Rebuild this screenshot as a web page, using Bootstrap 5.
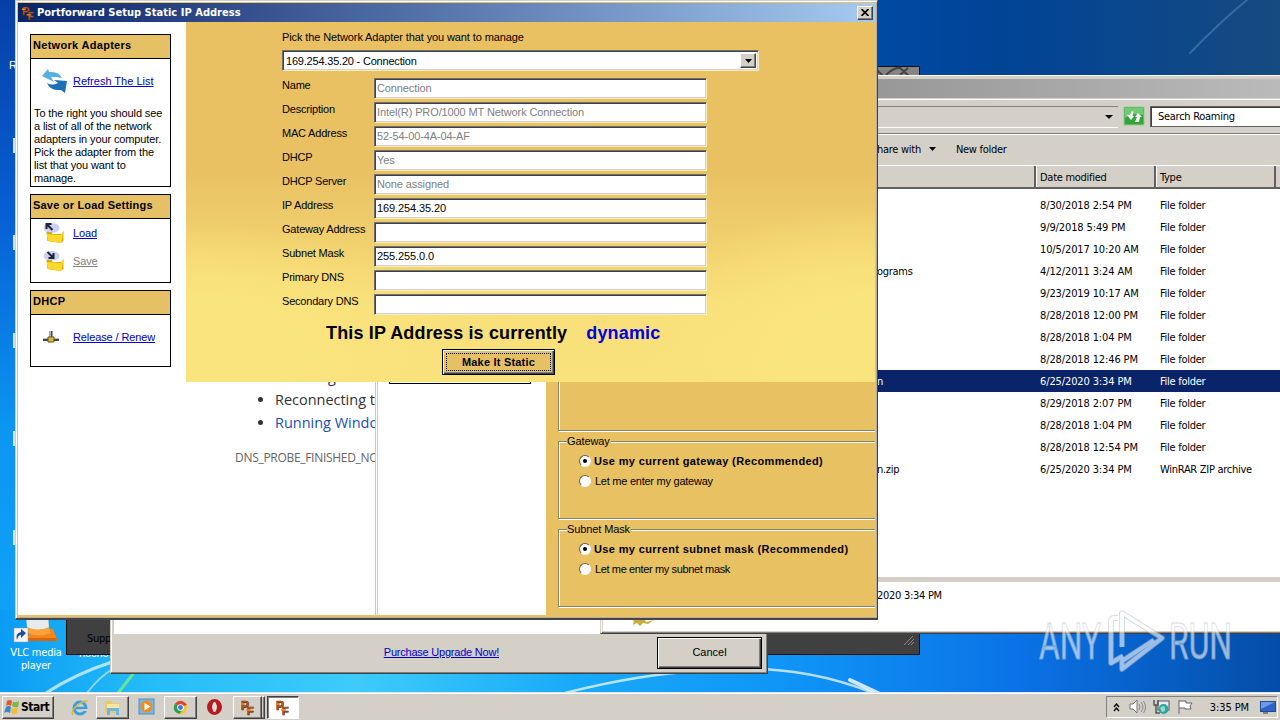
<!DOCTYPE html>
<html lang="en">
<head>
    <meta charset="UTF-8">
    <meta name="viewport" content="width=device-width, initial-scale=1.0">
    <title>Portforward Setup Static IP Address</title>
    <link href="https://cdn.jsdelivr.net/npm/bootstrap@5.3.3/dist/css/bootstrap.min.css" rel="stylesheet">
    <style>
        body {
            width: 1280px;
            height: 720px;
            overflow: hidden;
            font: 11px/13px "Liberation Sans", sans-serif;
            letter-spacing: -.11px;
            color: #000;
            background: #0a6ce0;
        }
        .tahoma { font-family: "DejaVu Sans Condensed", "DejaVu Sans", sans-serif; font-size: 11px; letter-spacing: -.28px; }
        .desktop, .win, .desk-item { position: absolute; }
        .desktop { inset: 0; overflow: hidden; white-space: nowrap; }
        .wallpaper { position: absolute; inset: 0; }
        .desk-item { color: #fff; text-align: center; }
        .sliver { left: 13px; width: 4px; height: 15px; background: #d5e4f2; }
        a { color: #0000c8; }
        svg { flex: none; display: block; }

        /* dark window and installer behind */
        .dark-win { left: 66px; top: 66px; width: 854px; height: 589px; background: #404040; border: 1px solid #111; }
        .setup-win { left: 110px; top: 400px; width: 658px; height: 274px; background: #d4d0c8; border: 1px solid #404040; border-left-color: #d4d0c8; box-shadow: inset -1px -1px #808080, inset 1px 0 #fff; padding: 0 4px 2px 3px; }
        .setup-body { background: #fff; height: 233px; }
        .cancel-btn { width: 105px; height: 32px; border: 1px solid #000; border-radius: 0; background: #d4d0c8; box-shadow: inset 1px 1px #fff, inset -1px -1px #404040, inset -2px -2px #808080; font: inherit; color: #000; padding: 0; }

        /* explorer */
        .explorer { left: 600px; top: 75px; width: 700px; height: 559px; background: #d4d0c8; border-left: 1px solid #d4d0c8; border-bottom: 1px solid #404040; box-shadow: inset 1px 1px #fff, inset 0 -1px #808080; padding: 4px 0 3px 2px; }
        .ex-title { height: 19px; background: linear-gradient(90deg, #808080, #bcbcbc); }
        .ex-address { height: 35px; border-top: 1px solid #fff; border-bottom: 1px solid #808080; padding: 6px 0 0 0; margin-top: 1px; }
        .ex-path { width: 515px; height: 22px; border: 1px solid #808080; border-width: 1px 0 0; border-bottom: 1px solid #fff; padding-right: 5px; }
        .ex-search { width: 160px; height: 21px; margin-left: 5px; padding-left: 7px; background: #fff; border: 1px solid #606060; box-shadow: inset 1px 1px #404040; }
        .ex-tools { height: 31px; border-top: 1px solid #fff; padding: 0 0 2px 274px; }
        .ex-head { height: 24px; border-top: 1px solid #fff; border-bottom: 2px solid #606060; }
        .ex-head > div { padding: 1px 0 0 4px; border-right: 2px solid #606060; box-shadow: inset 1px 0 #fff; }
        .col-name { width: 433px; }
        .col-date { width: 120px; }
        .col-kind { width: 120px; }
        .ex-list { height: 388px; padding-top: 5px; background: #fff; }
        .ex-row { height: 22px; line-height: 24px; }
        .ex-row .col-name { padding-left: 274px; }
        .ex-row .col-date, .ex-row .col-kind { padding-left: 4px; }
        .ex-row .col-date { letter-spacing: -.12px; }
        .ex-row.picked { background: #0a246a; color: #fff; }
        .ex-details { height: 49px; margin-top: 5px; padding-left: 27px; background: #fff; }

        /* main window */
        .main-win { left: 15px; top: 0; width: 863px; height: 620px; background: #ebc263; border: 1px solid #d4d0c8; border-right-color: #404040; border-bottom: 2px solid #49434a; box-shadow: inset 1px 1px #fff, inset -1px -1px #b5ada0; padding: 2px; }
        .main-title { height: 19px; padding: 1px 2px 1px 3px; background: linear-gradient(90deg, #0a246a, #a6caf0); color: #fff; }
        .main-title b { letter-spacing: .03px; margin-left: 1px; }
        .close-btn { width: 16px; height: 14px; background: #d4d0c8; border: 1px solid; border-color: #fff #404040 #404040 #fff; box-shadow: inset -1px -1px #808080; }
        .setting-side { width: 168px; background: #fff; padding: 12px 15px 0 12px; }
        .side-box { border: 1px solid #000; margin-bottom: 7px; }
        .side-box h2 { font: bold 11px/20px "Liberation Sans", sans-serif; letter-spacing: .3px; height: 24px; margin: 0; padding-left: 2px; background: #e6c064; border-bottom: 1px solid #000; }
        .side-box p { margin: 0; padding: 0 3px; letter-spacing: -.12px; }
        .link-row { height: 28px; padding-left: 11px; }
        .link-row a { margin-left: 6px; }
        .form-pane { height: 360px; padding: 9px 0 0 96px; background:
            radial-gradient(ellipse 300px 130px at 0 330px, #fae47e 0, #fae47e 40%, rgba(250,228,126,0) 100%),
            radial-gradient(ellipse 240px 150px at 690px 330px, #fae47e 0, #fae47e 35%, rgba(250,228,126,0) 100%),
            linear-gradient(#e9c163 0, #e9c163 150px, #f8df79 290px, #f9e17c 360px); }
        .sunken { background: #fff; border: 1px solid; border-color: #707070 #f8efc0 #f8efc0 #707070; box-shadow: inset 1px 1px #404040, inset -1px -1px #d4d0c8; }
        .adapter-pick { width: 477px; height: 21px; margin: 6px 0 7px; padding: 2px 2px 2px 3px; letter-spacing: -.2px; }
        .pick-arrow { width: 16px; background: #d4d0c8; border: 1px solid; border-color: #fff #404040 #404040 #fff; box-shadow: inset -1px -1px #808080; }
        .field-row { height: 24px; }
        .field-row label { width: 92px; padding-top: 1px; letter-spacing: -.2px; }
        .field-row .sunken { width: 333px; height: 21px; padding: 3px 2px; }
        .off { color: #808080; }
        .state-line { font: bold 18px/24px "Liberation Sans", sans-serif; padding-left: 44px; margin-top: 3px; letter-spacing: .15px; }
        .state-line span { color: #0000e0; margin-left: 19px; }
        .static-btn { width: 113px; height: 26px; margin: 4px 0 0 160px; padding: 3px; background: #e6c064; border: 1px solid #000; border-radius: 0; box-shadow: inset 1px 1px #fff, inset -1px -1px #404040, inset -2px -2px #808080; }
        .static-btn b { border: 1px dotted #000; font-size: 11px; line-height: 16px; letter-spacing: .2px; color: #000; }
        .lower { height: 233px; }
        .probe-pane { width: 190px; overflow: hidden; border-right: 1px solid #c8c8c8; font: 14.5px/23px "Open Sans", sans-serif; color: #333; letter-spacing: -.02px; }
        .probe-pane ul { margin: -17px 0 0; padding-left: 89px; }
        .probe-pane code { display: block; margin: 13px 0 0 49px; font: 12px/22px "Open Sans", sans-serif; color: #646464; letter-spacing: -.3px; }
        .blank-pane { width: 170px; background: #fff; padding: 0 15px 0 13px; box-shadow: inset 1px 0 #fff, inset 2px 0 #c8c8c8; }
        .blank-pane div { border: 1px solid #000; border-top: 0; height: 2px; }
        .opt-pane { padding-left: 12px; background: #e8c163; overflow: hidden; }
        .opt-group { width: 330px; height: 78px; border: 1px solid #85816f; box-shadow: 1px 1px #fff, inset 1px 1px #fff; padding-left: 8px; margin-bottom: 10px; }
        .opt-group legend { float: none; width: auto; margin: -7px 0 0; padding: 0 1px 0 0; font-size: 11px; line-height: 13px; background: #e8c163; display: table; }
        .opt-line { height: 20px; padding-left: 12px; gap: 4px; letter-spacing: -.25px; }
        .opt-line b { letter-spacing: .37px; margin-left: -1px; }
        .radio-dot { width: 12px; height: 12px; border: 1px solid; border-color: #606060 #fff #fff #606060; border-radius: 50%; background: #fff; }
        .radio-dot.on::after { content: ""; display: block; width: 4px; height: 4px; margin: 3px; border-radius: 50%; background: #000; }

        /* taskbar */
        .taskbar { position: absolute; left: 0; right: 0; bottom: 0; height: 28px; padding: 3px 2px 1px; background: #d4d0c8; border-top: 1px solid #e8e5de; box-shadow: inset 0 1px #fff; }
        .task-btn { height: 23px; border: 1px solid; border-color: #fff #404040 #404040 #fff; box-shadow: inset -1px -1px #808080; }
        .task-btn.active { background: #fff; border-color: #404040 #fff #fff #404040; box-shadow: inset 1px 1px #808080; }
        .tray { width: 172px; height: 22px; border: 1px solid; border-color: #808080 #fff #fff #808080; }
        .watermark { position: absolute; left: 1030px; top: 600px; letter-spacing: 0; overflow: visible; }
    </style>
</head>
<body>
<svg width="0" height="0" style="position:absolute">
    <defs>
        <symbol id="pf" viewBox="0 0 16 16">
            <g font-family="Liberation Sans" font-weight="bold" fill="#d86a1c" stroke="#5a2a10" stroke-width=".7">
                <text x="1" y="10" font-size="12">P</text>
                <text x="7" y="15" font-size="11">F</text>
            </g>
            <path d="M1 4h4M6 10h5" stroke="#f08a2c" stroke-width="1.5"/>
        </symbol>
        <symbol id="folder" viewBox="0 0 22 22">
            <ellipse cx="9" cy="6" rx="8" ry="5" fill="#ccd1f2"/>
            <path d="M4 10h5l1 2h9l2-3v10l-3 2-13-2z" fill="#d9a900"/>
            <path d="M4 12l14 1 3-4-2 12-13-2z" fill="#fbd92b"/>
        </symbol>
        <linearGradient id="sky" x1="0" y1="0" x2="1" y2="0">
            <stop offset="0" stop-color="#0a52c4"/><stop offset=".6" stop-color="#0050b0"/><stop offset=".78" stop-color="#004496"/><stop offset="1" stop-color="#164a80"/>
        </linearGradient>
        <linearGradient id="left" x1="0" y1="0" x2="0" y2="1">
            <stop offset="0" stop-color="#083fa6"/><stop offset=".3" stop-color="#0660d4"/><stop offset=".6" stop-color="#0c96f2"/><stop offset="1" stop-color="#12a8f8"/>
        </linearGradient>
        <linearGradient id="low" x1="0" y1="0" x2="1" y2="0">
            <stop offset="0" stop-color="#0b9cf4"/><stop offset=".12" stop-color="#25bdf8"/><stop offset=".28" stop-color="#3ecbfa"/><stop offset=".45" stop-color="#18aaf8"/><stop offset=".62" stop-color="#0f94f6"/><stop offset=".8" stop-color="#0a72e6"/><stop offset="1" stop-color="#044da6"/>
        </linearGradient>
    </defs>
</svg>

<div class="desktop">
    <svg class="wallpaper" width="1280" height="720">
        <rect width="1280" height="720" fill="url(#sky)"/>
        <rect width="110" height="720" fill="url(#left)"/>
        <rect y="610" width="1280" height="110" fill="url(#low)"/>
        <g fill="none" stroke="#fff" stroke-linecap="round">
            <path d="M46 693Q75 674 112 662" stroke-width="3" opacity=".65"/>
            <path d="M87 693Q98 678 114 668" stroke-width="2" opacity=".5"/>
            <path d="M118 693l15-19" stroke="#7dee7a" stroke-width="3" opacity=".8"/>
            <path d="M565 693Q640 674 700 671Q800 660 885 698" stroke-width="2.5" opacity=".7"/>
            <path d="M850 680l30 14" stroke-width="4" opacity=".8"/>
            <path d="M1190 53Q1220 22 1247 0" stroke="#7aa8da" stroke-width="2" opacity=".35"/>
        </g>
    </svg>

    <div class="desk-item" style="left:9px;top:59px">R</div>
    <div class="desk-item sliver" style="top:138px"></div>
    <div class="desk-item sliver" style="top:235px"></div>
    <div class="desk-item sliver" style="top:333px"></div>
    <div class="desk-item sliver" style="top:431px"></div>
    <div class="desk-item sliver" style="top:530px"></div>
    <div class="desk-item" style="left:79px;top:647px">nocho</div>
    <div class="desk-item tahoma" style="left:6px;top:614px;width:60px;letter-spacing:-.2px">
        <svg width="60" height="32" viewBox="0 0 60 32">
            <path d="M25 15l22 0 5 12H20z" fill="#f7841a"/>
            <path d="M21 24h30v3H21z" fill="#d9660a"/>
            <path d="M20 0h22l1 14q-11 5-22 0z" fill="#e8ebec"/>
            <path d="M21 13q11 5 22 0l2 6q-12 5-23 0z" fill="#f9a23a"/>
            <path d="M8 14h14v14H8z" fill="#f4f4f4" stroke="#999" stroke-width=".5"/>
            <path d="M11 26q-2-7 4-8v-3l5 4-5 5v-3q-3 0-4 5z" fill="#1d4fa0"/>
        </svg>
        <div class="mt-0">VLC media<br>player</div>
    </div>

    <div class="win dark-win d-flex flex-column justify-content-between">
        <svg width="852" height="9"><rect x="780" width="72" height="9" fill="#858585"/><path d="M808 1l8 8M819 8q8-8 14-7l9 8M833 8l8-7" stroke="#444" stroke-width="2" fill="none"/></svg>
        <div class="d-flex justify-content-between align-items-end" style="padding:0 4px 9px 20px">
            <span class="tahoma">Supp</span>
            <svg width="12" height="10"><path d="M1 10L10 1M5 10l6-6M8 10l3-3" stroke="#888"/></svg>
        </div>
    </div>

    <div class="win setup-win d-flex flex-column">
        <div class="setup-body"></div>
        <div class="flex-fill d-flex justify-content-end align-items-center">
            <a href="#" style="letter-spacing:-.22px;margin-right:158px">Purchase Upgrade Now!</a>
            <button class="btn cancel-btn" style="margin-right:1px">Cancel</button>
        </div>
    </div>

    <div class="win explorer tahoma">
        <div class="ex-title"></div>
        <div class="ex-address d-flex align-items-start">
            <div class="ex-path d-flex justify-content-end align-items-center flex-shrink-0"><svg width="8" height="4" viewBox="0 0 8 4"><path d="M0 0h8L4 4z"/></svg></div>
            <svg width="22" height="21" viewBox="0 0 22 21" style="margin-left:5px">
                <rect x="1" y="1" width="20" height="18" fill="#35a33c" stroke="#8fcf8f"/>
                <path d="M2 2h18v7q-9-3-18 3z" fill="#72ca72"/>
                <path d="M9 5L7 9H4l4 5 3-4H9.500l1-4zM12 16l2-5h-2l3-4 4 4h-2l-1 5z" fill="#fff"/>
            </svg>
            <div class="ex-search d-flex align-items-center">Search Roaming</div>
        </div>
        <div class="ex-tools d-flex align-items-center">
            <span>hare with</span>
            <svg width="7" height="4" style="margin-left:8px"><path d="M0 0h7L3.500 4z"/></svg>
            <span style="margin-left:20px">New folder</span>
        </div>
        <div class="ex-head d-flex align-items-stretch">
            <div class="col-name"></div>
            <div class="col-date d-flex align-items-center">Date modified</div>
            <div class="col-kind d-flex align-items-center">Type</div>
        </div>
        <div class="ex-list" id="fileList"></div>
        <div class="ex-details d-flex align-items-start">
            <svg width="24" height="44" viewBox="0 0 24 44"><path d="M0 36h14l2 4 8-2-6 4-5-1-3 3-3-3-4 2 1-4z" fill="#c9ad3e"/></svg>
            <span style="margin:7px 0 0 223px">2020 3:34 PM</span>
        </div>
    </div>

    <div class="win main-win">
        <div class="main-title d-flex align-items-center tahoma">
            <svg width="15" height="16"><use href="#pf"/></svg>
            <b>Portforward Setup Static IP Address</b>
            <div class="close-btn ms-auto d-flex justify-content-center align-items-center"><svg width="8" height="7"><path d="M.5 0l7 7M7.500 0l-7 7" stroke="#000" stroke-width="1.600"/></svg></div>
        </div>
        <div class="d-flex">
            <div class="setting-side">
                <div class="side-box" style="height:153px">
                    <h2>Network Adapters</h2>
                    <div class="link-row d-flex align-items-center" style="height:44px">
                        <svg width="25" height="24" viewBox="0 0 25 24">
                            <path d="M0 7L6 0l1 3q10-1 13 6l-6-1-5 0 3 5z" fill="#55b0de"/>
                            <path d="M25 12l-2 12-4-3Q8 22 5 14q5 3 11 0l-4-3z" fill="#1d70b2"/>
                        </svg>
                        <a href="#" style="letter-spacing:0">Refresh The List</a>
                    </div>
                    <p style="padding-top:4px">To the right you should see<br>a list of all of the network<br>adapters in your computer.<br>Pick the adapter from the<br>list that you want to<br>manage.</p>
                </div>
                <div class="side-box" style="height:89px">
                    <h2 style="letter-spacing:.2px">Save or Load Settings</h2>
                    <div class="link-row d-flex align-items-center">
                        <svg width="23" height="22" viewBox="0 0 22 22"><use href="#folder"/><path d="M10 8L5 3M4 7V2h5" stroke="#223" stroke-width="2" fill="none"/></svg>
                        <a href="#" style="margin-left:8px">Load</a>
                    </div>
                    <div class="link-row d-flex align-items-center">
                        <svg width="23" height="22" viewBox="0 0 22 22"><use href="#folder"/><path d="M5 2l5 5M11 3v5H6" stroke="#223" stroke-width="2" fill="none"/></svg>
                        <a href="#" class="off" style="margin-left:8px">Save</a>
                    </div>
                </div>
                <div class="side-box" style="height:77px">
                    <h2>DHCP</h2>
                    <div class="link-row d-flex align-items-center" style="height:44px">
                        <svg width="19" height="14" viewBox="0 0 19 14"><path d="M1 9.500h16M9 1v7" stroke="#444" stroke-width="3"/><path d="M1 8.500h16M8.500 1v6" stroke="#bdbdbd"/><path d="M6 7h6v5H6z" fill="#d8b838" stroke="#66551a"/></svg>
                        <a href="#" style="margin-left:12px">Release / Renew</a>
                    </div>
                </div>
            </div>
            <div class="form-pane flex-fill">
                <div>Pick the Network Adapter that you want to manage</div>
                <div class="adapter-pick sunken d-flex justify-content-between">
                    <span style="line-height:16px">169.254.35.20 - Connection</span>
                    <span class="pick-arrow d-flex justify-content-center align-items-center"><svg width="7" height="4"><path d="M0 0h7L3.500 4z"/></svg></span>
                </div>
                <div id="fields"></div>
                <div class="state-line">This IP Address is currently<span>dynamic</span></div>
                <button class="btn static-btn d-flex"><b class="flex-fill">Make It Static</b></button>
            </div>
        </div>
        <div class="lower d-flex">
            <div class="bg-white flex-shrink-0" style="width:168px"></div>
            <div class="probe-pane bg-white flex-shrink-0">
                <ul>
                    <li><span style="margin-left:53px">g</span></li>
                    <li>Reconnecting t</li>
                    <li><span style="color:#1a4fb4">Running Windo</span></li>
                </ul>
                <code>DNS_PROBE_FINISHED_NO</code>
            </div>
            <div class="blank-pane flex-shrink-0"><div></div></div>
            <div class="opt-pane flex-fill">
                <div class="opt-group" style="height:49px;border-top:0;box-shadow:1px 1px #fff, inset 1px 0 #fff"></div>
                <div class="opt-group">
                    <legend>Gateway</legend>
                    <div class="opt-line d-flex align-items-center" style="margin-top:3px"><span class="radio-dot on"></span><b>Use my current gateway (Recommended)</b></div>
                    <div class="opt-line d-flex align-items-center"><span class="radio-dot"></span>Let me enter my gateway</div>
                </div>
                <div class="opt-group">
                    <legend>Subnet Mask</legend>
                    <div class="opt-line d-flex align-items-center" style="margin-top:3px"><span class="radio-dot on"></span><b>Use my current subnet mask (Recommended)</b></div>
                    <div class="opt-line d-flex align-items-center" style="letter-spacing:-.37px"><span class="radio-dot"></span>Let me enter my subnet mask</div>
                </div>
            </div>
        </div>
    </div>

    <div class="taskbar d-flex align-items-start tahoma">
        <div class="task-btn d-flex align-items-center" style="width:52px;padding-left:1px">
            <svg width="17" height="17" viewBox="0 0 17 17"><path d="M3 2q3-2 5 0L7 7Q4 5 2 7z" fill="#e2582a"/><path d="M9 3q3 1 6-1l-1 6q-3 1-6-1z" fill="#78b83a"/><path d="M2 8q3-2 5 0l-1 6q-3-2-6 0z" fill="#3a87d0"/><path d="M8 9q3 1 6 0l-1 5q-3 2-6 0z" fill="#f5bd2c"/></svg>
            <b style="font-size:12px;letter-spacing:-.5px">Start</b>
        </div>
        <svg width="18" height="20" viewBox="0 0 18 20" style="margin:2px 7px 0 17px"><circle cx="9" cy="10" r="6" fill="none" stroke="#3b9fdc" stroke-width="3"/><path d="M4 10h11" stroke="#3b9fdc" stroke-width="2.500"/><path d="M11 12h6" stroke="#d4d0c8" stroke-width="2"/><path d="M2 17Q-1 13 7 7q8-6 10-3" fill="none" stroke="#e0b840" stroke-width="1.500"/></svg>
        <div class="task-btn d-flex justify-content-center align-items-center" style="width:33px">
            <svg width="17" height="17" viewBox="0 0 17 17"><path d="M1 2h6l1 2h7v10H1z" fill="#e9c968"/><path d="M3 5h12v6H3z" fill="#f8e7a0"/><path d="M3 16V9h12v7h-3v-4H6v4z" fill="#6db6e4"/></svg>
        </div>
        <svg width="17" height="18" viewBox="0 0 17 18" style="margin:2px 9px 0 9px"><rect x="1" y="1" width="15" height="15" fill="#76b7e6" stroke="#4e8fc2"/><circle cx="8.500" cy="8.500" r="6" fill="#f08c1e"/><path d="M6.500 5l6 3.500-6 4z" fill="#fff"/></svg>
        <div class="task-btn d-flex justify-content-center align-items-center" style="width:33px">
            <svg width="15" height="15" viewBox="0 0 16 16"><circle cx="8" cy="8" r="7" fill="#f2c62c"/><path d="M8 8L2 4q6-7 13 1z" fill="#dc4436"/><path d="M8 8L2 4q-4 8 5 11l3-5z" fill="#2f9e50"/><circle cx="8" cy="8" r="3.500" fill="#fff"/><circle cx="8" cy="8" r="2.600" fill="#3c78e0"/></svg>
        </div>
        <svg width="17" height="18" viewBox="0 0 17 18" style="margin:2px 10px 0 9px"><ellipse cx="8.500" cy="9" rx="5" ry="5.500" fill="none" stroke="#b81a1e" stroke-width="5"/><ellipse cx="8.500" cy="9" rx="2" ry="5" fill="#e8dedc"/></svg>
        <div class="task-btn d-flex justify-content-center align-items-center" style="width:29px"><svg width="16" height="16"><use href="#pf"/></svg></div>
        <div class="task-btn border-start-0" style="width:3px"></div>
        <div class="task-btn active d-flex justify-content-center align-items-center" style="width:32px;margin-left:2px"><svg width="16" height="16"><use href="#pf"/></svg></div>
        <div class="tray ms-auto d-flex align-items-center" style="padding-left:6px">
            <svg width="7" height="9"><path d="M1 4l2.500-3L6 4M1 8l2.500-3L6 8" fill="none" stroke="#000" stroke-width="1.300"/></svg>
            <svg width="17" height="16" viewBox="0 0 17 16" style="margin-left:9px"><path d="M1 5h3l4-4v13l-4-4H1z" fill="#fff" stroke="#777"/><path d="M10 5q2 3 0 6M12 3q4 5 0 10M14.500 2q4 6 0 12" fill="none" stroke="#8a8a8a"/></svg>
            <svg width="17" height="16" viewBox="0 0 17 16" style="margin-left:7px"><rect x="5" y="2" width="11" height="9" fill="#e8eef0" stroke="#555"/><path d="M1 1v5h4V1M3 6v8h4" fill="none" stroke="#555" stroke-width="1.500"/><circle cx="10.500" cy="10" r="5" fill="#2aa79c"/><path d="M7 9q4-4 5 0t-3 4" fill="#8edccb"/></svg>
            <svg width="17" height="16" viewBox="0 0 17 16" style="margin-left:7px"><path d="M2 1v14M2 2h7v2h6l-2 3 1 3H8V9H2" fill="#fff" stroke="#666"/></svg>
            <span class="ms-auto" style="letter-spacing:-.1px">3:35 PM</span>
            <svg width="16" height="14" viewBox="0 0 16 14" style="margin:0 1px 0 11px"><rect x=".5" y="1.500" width="15" height="10" fill="#2b63c8" stroke="#234a8c"/><path d="M1 2h14L1 9z" fill="#6c9be6"/><path d="M3 13h5" stroke="#333"/></svg>
        </div>
    </div>

    <svg class="watermark" width="220" height="80" opacity=".6">
        <g font-family="Roboto" font-weight="400" font-size="50" fill="#fff" stroke="#b9c2ce" stroke-width=".9">
            <text x="9" y="59" textLength="62" lengthAdjust="spacingAndGlyphs">ANY</text>
            <text x="139" y="59" textLength="63" lengthAdjust="spacingAndGlyphs">RUN</text>
        </g>
        <g fill="none" stroke-linejoin="round">
            <path d="M92 47V13l40 25-40 31v-8l32-21M88 18h-4q-3 0-3 3v42l12-7" stroke="#b4bcc8" stroke-width="5.500"/>
            <path d="M92 47V13l40 25-40 31v-8l32-21M88 18h-4q-3 0-3 3v42l12-7" stroke="#fff" stroke-width="3.800"/>
        </g>
    </svg>
</div>

<script src="https://cdn.jsdelivr.net/npm/bootstrap@5.3.3/dist/js/bootstrap.bundle.min.js"></script>
<script>
    const files = [
        ['', '8/30/2018 2:54 PM'],
        ['', '9/9/2018 5:49 PM'],
        ['', '10/5/2017 10:20 AM'],
        ['ograms', '4/12/2011 3:24 AM'],
        ['', '9/23/2019 10:17 AM'],
        ['', '8/28/2018 12:00 PM'],
        ['', '8/28/2018 1:04 PM'],
        ['', '8/28/2018 12:46 PM'],
        ['n', '6/25/2020 3:34 PM'],
        ['', '8/29/2018 2:07 PM'],
        ['', '8/28/2018 1:04 PM'],
        ['', '8/28/2018 12:54 PM'],
        ['n.zip', '6/25/2020 3:34 PM', 'WinRAR ZIP archive']
    ];
    document.getElementById('fileList').innerHTML = files.map(([name, date, kind], i) => `
        <div class="ex-row d-flex${i === 8 ? ' picked' : ''}">
            <div class="col-name">${name}</div>
            <div class="col-date">${date}</div>
            <div class="col-kind">${kind || 'File folder'}</div>
        </div>`).join('');

    // the first five values are read-only
    const fields = [
        ['Name', 'Connection'],
        ['Description', 'Intel(R) PRO/1000 MT Network Connection'],
        ['MAC Address', '52-54-00-4A-04-AF'],
        ['DHCP', 'Yes'],
        ['DHCP Server', 'None assigned'],
        ['IP Address', '169.254.35.20'],
        ['Gateway Address', ''],
        ['Subnet Mask', '255.255.0.0'],
        ['Primary DNS', ''],
        ['Secondary DNS', '']
    ];
    document.getElementById('fields').innerHTML = fields.map(([label, value], i) => `
        <div class="field-row d-flex">
            <label>${label}</label>
            <div class="sunken${i < 5 ? ' off' : ''}">${value}</div>
        </div>`).join('');
</script>
</body>
</html>
